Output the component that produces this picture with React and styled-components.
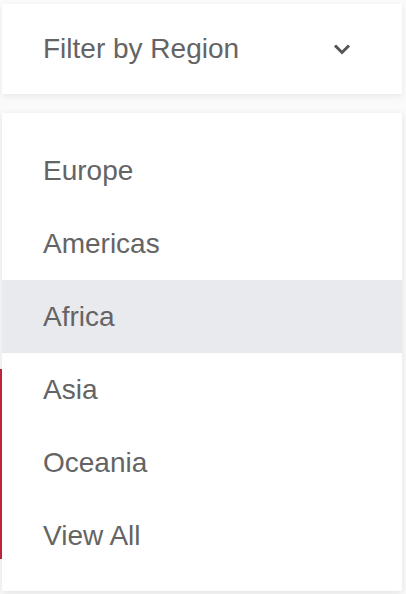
import React from 'react';
import styled, { createGlobalStyle } from 'styled-components';

const GlobalStyle = createGlobalStyle`
  body {
    margin: 0;
    background: #fafafa;
    font-family: 'Liberation Sans', Arial, sans-serif;
  }
`;

const Page = styled.main`
  position: relative;
  width: 406px;
  height: 594px;
  overflow: hidden;
`;

const Behind = styled.section`
  display: flex;
  flex-direction: column;
  padding-top: 369px;
`;

const Card = styled.div`
  height: 190px;
  width: 300px;
  background: #ffffff;
  border-left: 2px solid #c8243d;
`;

const FilterWrap = styled.div`
  position: absolute;
  top: 4px;
  left: 2px;
  width: 400px;
`;

const Select = styled.button`
  display: flex;
  align-items: center;
  justify-content: space-between;
  width: 100%;
  height: 90px;
  padding: 0 51px 0 41px;
  border: none;
  background: #ffffff;
  box-shadow: 0 2px 6px rgba(0, 0, 0, 0.08);
  font-family: inherit;
  font-size: 28px;
  color: #646464;
  cursor: pointer;
`;

const Menu = styled.ul`
  position: absolute;
  top: 109px;
  left: 0;
  width: 100%;
  margin: 0;
  padding: 21px 0 19px;
  list-style: none;
  background: #ffffff;
  box-shadow: 0 2px 8px rgba(0, 0, 0, 0.1);
`;

const Item = styled.li`
  display: flex;
  align-items: center;
  height: 73px;
  padding-left: 41px;
  padding-top: 1px;
  box-sizing: border-box;
  font-size: 28px;
  color: #646464;
  background: ${({ $active }) => ($active ? '#e9eaee' : 'transparent')};
`;

const Chevron = () => (
  <svg width="18" height="12" viewBox="0 0 18 12" fill="none">
    <polyline points="2,2.5 9,9.5 16,2.5" stroke="#555" strokeWidth="3" />
  </svg>
);

const regions = ['Europe', 'Americas', 'Africa', 'Asia', 'Oceania', 'View All'];

const App = () => (
  <Page>
    <GlobalStyle />
    <Behind>
      <Card />
    </Behind>
    <FilterWrap>
      <Select>
        Filter by Region
        <Chevron />
      </Select>
      <Menu>
        {regions.map((r) => (
          <Item key={r} $active={r === 'Africa'}>
            {r}
          </Item>
        ))}
      </Menu>
    </FilterWrap>
  </Page>
);

export default App;
